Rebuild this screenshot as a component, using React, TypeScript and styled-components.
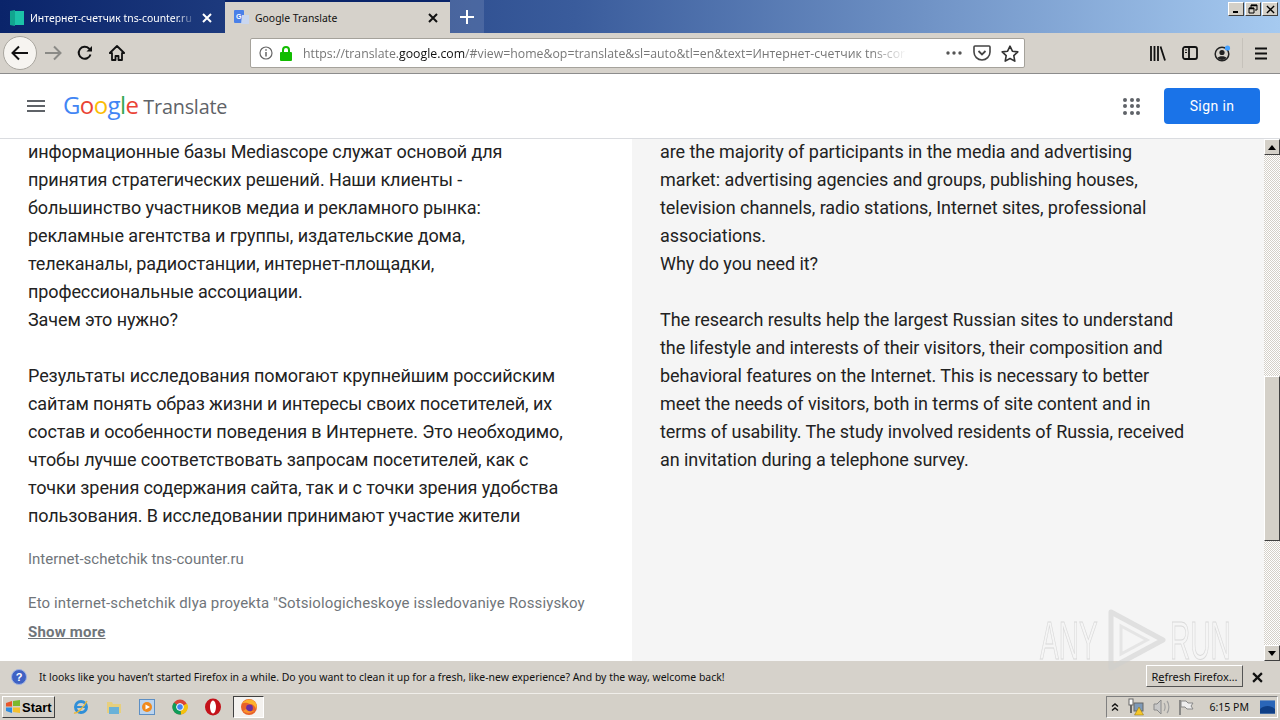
import React from "react";
import styled, { createGlobalStyle } from "styled-components";

const Global = createGlobalStyle`
	html, body { margin: 0; padding: 0; width: 1280px; height: 720px; overflow: hidden; background: #fff; }
	* { box-sizing: border-box; }
`;

const Page = styled.div`
	width: 1280px;
	height: 720px;
	display: flex;
	flex-direction: column;
	position: relative;
	overflow: hidden;
	font-family: "Roboto", "Liberation Sans", sans-serif;
`;

/* ---------- browser chrome ---------- */
const TabStrip = styled.div`
	height: 33px;
	flex: none;
	display: flex;
	align-items: stretch;
	background: linear-gradient(90deg, #0a246a 0%, #3a5c9c 45%, #a6caf0 100%);
	font-family: "Noto Sans", "Liberation Sans", sans-serif;
	font-size: 10.4px;
`;

const Tab = styled.div<{ $active?: boolean }>`
	display: flex;
	align-items: center;
	padding: ${(p) => (p.$active ? "0 12px 0 9px" : "2px 12px 0 10px")};
	color: ${(p) => (p.$active ? "#111" : "#fff")};
	background: ${(p) => (p.$active ? "#d6d2cb" : "transparent")};
	border-top: ${(p) => (p.$active ? "2px solid #0a246a" : "none")};
	margin-left: ${(p) => (p.$active ? "1px" : "0")};
	width: ${(p) => (p.$active ? "225px" : "224px")};
`;

const TabTitle = styled.span<{ $fade?: boolean }>`
	flex: 1;
	margin-left: ${(p) => (p.$fade ? 6 : 5)}px;
	white-space: nowrap;
	overflow: hidden;
	${(p) => p.$fade && "-webkit-mask-image: linear-gradient(90deg, #000 88%, transparent 100%); margin-right: 6px;"}
`;

const NewTab = styled.div`
	width: 34px;
	display: flex;
	align-items: center;
	justify-content: center;
	background: rgba(255, 255, 255, 0.12);
`;

const Spacer = styled.div`
	flex: 1;
`;

const WinButtons = styled.div`
	display: flex;
	gap: 1px;
	padding: 2px 2px 0 0;
	align-items: flex-start;
`;

const WinButton = styled.div`
	width: 16px;
	height: 14px;
	background: #d4d0c8;
	border: 1px solid;
	border-color: #fff #404040 #404040 #fff;
	display: flex;
	align-items: center;
	justify-content: center;
`;

const NavBar = styled.div`
	height: 41px;
	flex: none;
	display: flex;
	align-items: center;
	background: #d6d2cb;
	border-bottom: 1px solid #8c8c8c;
	padding-left: 3px;
`;

const BackCircle = styled.div`
	width: 34px;
	height: 34px;
	border-radius: 50%;
	background: #f6f4f0;
	border: 1px solid #a9a69f;
	display: flex;
	align-items: center;
	justify-content: center;
`;

const NavIcon = styled.div<{ $w?: number }>`
	width: ${(p) => p.$w ?? 32}px;
	height: 32px;
	display: flex;
	align-items: center;
	justify-content: center;
	flex: none;
`;

const UrlBar = styled.div`
	width: 775px;
	height: 30px;
	margin-left: 117px;
	background: #fff;
	border: 1px solid #a5a29b;
	border-radius: 2px;
	display: flex;
	align-items: center;
	padding: 0 5px 0 8px;
	font-family: "Open Sans", "Liberation Sans", sans-serif;
	font-size: 12.3px;
	color: #777;
	flex: none;
`;

const UrlText = styled.div`
	width: 604px;
	margin-left: 10px;
	white-space: nowrap;
	overflow: hidden;
	-webkit-mask-image: linear-gradient(90deg, #000 94%, transparent 100%);
	b {
		font-weight: 400;
		color: #111;
	}
`;

const UrlIcons = styled.div`
	display: flex;
	align-items: center;
	gap: 10px;
	margin-left: auto;
`;

const ToolIcons = styled.div`
	display: flex;
	align-items: center;
	margin-left: auto;
	padding-right: 7px;
`;

const ToolDivider = styled.div`
	width: 1px;
	height: 30px;
	background: #c6c2bb;
	margin: 0 6px 0 4px;
`;

/* ---------- translate header ---------- */
const Header = styled.header`
	height: 65px;
	flex: none;
	background: #fff;
	border-bottom: 1px solid #dadce0;
	display: flex;
	align-items: center;
	padding: 0 20px 0 27px;
`;

const Burger = styled.div`
	width: 18px;
	height: 12px;
	border-top: 2px solid #5f6368;
	border-bottom: 2px solid #5f6368;
	position: relative;
	&::after {
		content: "";
		position: absolute;
		left: 0;
		right: 0;
		top: 3px;
		height: 2px;
		background: #5f6368;
	}
`;

const Logo = styled.div`
	margin: -3px 0 0 18px;
	display: flex;
	align-items: baseline;
	font-family: "Open Sans", "Liberation Sans", sans-serif;
	font-size: 24px;
	letter-spacing: -0.6px;
`;

const LogoLetter = styled.span<{ $c: string }>`
	color: ${(p) => p.$c};
`;

const LogoWord = styled.span`
	margin-left: 5px;
	font-size: 19.8px;
	letter-spacing: -0.2px;
	color: #5f6368;
`;

const AppsGrid = styled.div`
	margin-left: auto;
	width: 17px;
	display: grid;
	grid-template-columns: repeat(3, 4px);
	gap: 2.5px;
`;

const AppsDot = styled.span`
	width: 4px;
	height: 4px;
	border-radius: 50%;
	background: #5f6368;
`;

const SignIn = styled.div`
	margin-left: 24px;
	width: 96px;
	height: 36px;
	background: #1a73e8;
	border-radius: 4px;
	color: #fff;
	font-size: 14px;
	font-weight: 400;
	letter-spacing: 0.4px;
	display: flex;
	align-items: center;
	justify-content: center;
`;

/* ---------- content ---------- */
const Content = styled.div`
	flex: 1;
	min-height: 0;
	display: flex;
	overflow: hidden;
`;

const SourceCol = styled.div`
	width: 632px;
	padding: 0 0 0 28px;
	background: #fff;
	display: flex;
	flex-direction: column;
`;

const ResultCol = styled.div`
	width: 632px;
	padding-left: 28px;
	background: #f5f5f5;
`;

const Lines = styled.div<{ $spacing: number }>`
	margin-top: -1px;
	font-size: 18px;
	line-height: 28px;
	letter-spacing: ${(p) => p.$spacing}px;
	color: #222;
	white-space: nowrap;
`;

const Line = styled.div`
	height: 28px;
`;

const Translit = styled.div`
	margin-top: 19px;
	font-size: 15px;
	line-height: 20px;
	color: #70757a;
	white-space: nowrap;
`;

const TranslitBody = styled(Translit)`
	margin-top: 24px;
	letter-spacing: 0.12px;
`;

const ShowMore = styled.div`
	margin-top: 9px;
	font-size: 15px;
	line-height: 20px;
	font-weight: 700;
	letter-spacing: 0.2px;
	color: #70757a;
	text-decoration: underline;
`;

const ScrollBar = styled.div`
	width: 16px;
	display: flex;
	flex-direction: column;
	background: repeating-conic-gradient(#d4d0c8 0% 25%, #fff 0% 50%) 0 0 / 2px 2px;
`;

const ScrollBtn = styled.div`
	width: 16px;
	height: 16px;
	background: #d4d0c8;
	border: 1px solid;
	border-color: #fff #404040 #404040 #fff;
	display: flex;
	align-items: center;
	justify-content: center;
	flex: none;
`;

const ScrollThumb = styled.div`
	width: 16px;
	height: 165px;
	margin-top: 221px;
	background: #d4d0c8;
	border: 1px solid;
	border-color: #fff #404040 #404040 #fff;
`;

const ScrollGap = styled.div`
	flex: 1;
`;

/* ---------- notification + taskbar ---------- */
const InfoBar = styled.div`
	height: 33px;
	flex: none;
	display: flex;
	align-items: center;
	padding: 0 17px 0 11px;
	background: #d6d2cb;
	border-bottom: 1px solid #f0eeea;
	font-family: "Noto Sans", "Liberation Sans", sans-serif;
	font-size: 10.45px;
	color: #111;
`;

const InfoText = styled.span`
	margin-left: 12px;
	white-space: nowrap;
`;

const RefreshBtn = styled.div`
	margin: 0 9px 2px auto;
	width: 97px;
	height: 22px;
	background: #d4d0c8;
	border: 1px solid;
	border-color: #fff #555 #555 #fff;
	display: flex;
	align-items: center;
	justify-content: center;
	font-size: 11px;
	white-space: nowrap;
	u {
		text-decoration: underline;
	}
`;

const Taskbar = styled.div`
	height: 26px;
	flex: none;
	background: #d4d0c8;
	display: flex;
	align-items: center;
	padding: 0 2px;
`;

const StartBtn = styled.div`
	width: 53px;
	height: 22px;
	background: #d4d0c8;
	border: 1px solid;
	border-color: #fff #404040 #404040 #fff;
	display: flex;
	align-items: center;
	gap: 1px;
	padding-left: 2px;
	font-family: "Liberation Sans", sans-serif;
	font-weight: 700;
	font-size: 13px;
	color: #000;
`;

const QuickIcons = styled.div`
	display: flex;
	align-items: center;
	margin-left: 18px;
	gap: 17px;
`;

const ActiveTask = styled.div`
	width: 31px;
	height: 22px;
	margin-left: -5px;
	background: #f4f2ef;
	border: 1px solid;
	border-color: #404040 #fff #fff #404040;
	display: flex;
	align-items: center;
	justify-content: center;
`;

const Tray = styled.div`
	margin-left: auto;
	width: 172px;
	height: 22px;
	border: 1px solid;
	border-color: #808080 #fff #fff #808080;
	display: flex;
	align-items: center;
	padding: 0 2px 0 3px;
	font-family: "Noto Sans", "Liberation Sans", sans-serif;
	font-size: 10.5px;
	color: #111;
	gap: 8px;
`;

const Clock = styled.span`
	margin-left: auto;
	white-space: nowrap;
`;

const Watermark = styled.div`
	position: absolute;
	left: 1040px;
	top: 608px;
	width: 192px;
	height: 64px;
	display: flex;
	align-items: center;
	justify-content: space-between;
	pointer-events: none;
`;

const WatermarkWord = styled.span`
	display: block;
	width: 62px;
	font-family: "Liberation Sans", sans-serif;
	font-size: 54px;
	line-height: 64px;
	color: transparent;
	-webkit-text-stroke: 1px rgba(205, 205, 205, 0.7);
	transform: scaleX(0.52);
	transform-origin: left center;
	white-space: nowrap;
`;

/* ---------- drawings ---------- */
const X = ({ c, s = 10, w = 2 }: { c: string; s?: number; w?: number }) => (
	<svg width={s} height={s} viewBox="0 0 10 10">
		<path d="M1 1L9 9M9 1L1 9" stroke={c} strokeWidth={w} fill="none" />
	</svg>
);

const Firefox = () => (
	<svg width="18" height="18" viewBox="0 0 18 18">
		<circle cx="9" cy="9" r="8" fill="#e8622a" />
		<circle cx="9.5" cy="10" r="3.4" fill="#6a2fa0" />
		<path d="M2 6C4 1 12 0 15 4c2 2 2 5 1 7-1-3-3-5-6-5C7 5 5 4 2 6z" fill="#fdb32b" />
		<path d="M3 13c3 3 9 3 12-1-3 2-7 2-9-1z" fill="#f9912c" />
	</svg>
);

const sourceLines = [
	"информационные базы Mediascope служат основой для",
	"принятия стратегических решений. Наши клиенты -",
	"большинство участников медиа и рекламного рынка:",
	"рекламные агентства и группы, издательские дома,",
	"телеканалы, радиостанции, интернет-площадки,",
	"профессиональные ассоциации.",
	"Зачем это нужно?",
	"",
	"Результаты исследования помогают крупнейшим российским",
	"сайтам понять образ жизни и интересы своих посетителей, их",
	"состав и особенности поведения в Интернете. Это необходимо,",
	"чтобы лучше соответствовать запросам посетителей, как с",
	"точки зрения содержания сайта, так и с точки зрения удобства",
	"пользования. В исследовании принимают участие жители",
];

const resultLines = [
	"are the majority of participants in the media and advertising",
	"market: advertising agencies and groups, publishing houses,",
	"television channels, radio stations, Internet sites, professional",
	"associations.",
	"Why do you need it?",
	"",
	"The research results help the largest Russian sites to understand",
	"the lifestyle and interests of their visitors, their composition and",
	"behavioral features on the Internet. This is necessary to better",
	"meet the needs of visitors, both in terms of site content and in",
	"terms of usability. The study involved residents of Russia, received",
	"an invitation during a telephone survey.",
];

const logoLetters: [string, string][] = [
	["G", "#4285f4"],
	["o", "#ea4335"],
	["o", "#fbbc05"],
	["g", "#4285f4"],
	["l", "#34a853"],
	["e", "#ea4335"],
];

const App: React.FC = () => {
	return (
		<Page>
			<Global />
			<TabStrip>
				<Tab>
					<svg width="14" height="16" viewBox="0 0 14 16">
						<path d="M0 1l5-1v16l-5-1z" fill="#12a58f" />
						<rect x="5" y="1" width="9" height="14" fill="#1cc3a8" />
					</svg>
					<TabTitle $fade>Интернет-счетчик tns-counter.ru</TabTitle>
					<X c="#fff" />
				</Tab>
				<Tab $active>
					<svg width="16" height="16" viewBox="0 0 16 16">
						<rect x="0" y="0" width="10" height="13" rx="1" fill="#4a80e8" />
						<path d="M8 5h7v9H7z" fill="#c9d6ef" />
						<text x="2" y="9" fontSize="7" fill="#fff" fontFamily="Liberation Sans" fontWeight="700">G</text>
					</svg>
					<TabTitle>Google Translate</TabTitle>
					<X c="#111" />
				</Tab>
				<NewTab>
					<svg width="14" height="14" viewBox="0 0 14 14">
						<path d="M7 0v14M0 7h14" stroke="#fff" strokeWidth="2" />
					</svg>
				</NewTab>
				<Spacer />
				<WinButtons>
					<WinButton>
						<svg width="8" height="8" viewBox="0 0 8 8"><rect x="1" y="6" width="5" height="2" fill="#000" /></svg>
					</WinButton>
					<WinButton>
						<svg width="10" height="10" viewBox="0 0 10 10">
							<path d="M3 1h6v5H7M1 4h5v5H1z M3 1v3" fill="none" stroke="#000" strokeWidth="1" />
							<path d="M3 1.5h6M1 4.5h5" stroke="#000" strokeWidth="1.5" />
						</svg>
					</WinButton>
					<WinButton>
						<X c="#000" s={9} w={1.5} />
					</WinButton>
				</WinButtons>
			</TabStrip>

			<NavBar>
				<BackCircle>
					<svg width="18" height="16" viewBox="0 0 18 16">
						<path d="M1.5 8H17M8 1.5L1.5 8 8 14.5" fill="none" stroke="#111" strokeWidth="2" />
					</svg>
				</BackCircle>
				<NavIcon>
					<svg width="18" height="16" viewBox="0 0 18 16">
						<path d="M16.5 8H1M10 1.5L16.5 8 10 14.5" fill="none" stroke="#8a8a86" strokeWidth="2" />
					</svg>
				</NavIcon>
				<NavIcon>
					<svg width="16" height="16" viewBox="0 0 16 16">
						<path d="M13.5 9.5A6 6 0 1 1 12 3.5L14 5" fill="none" stroke="#111" strokeWidth="2" />
						<path d="M15 1v5.5H9.5z" fill="#111" />
					</svg>
				</NavIcon>
				<NavIcon>
					<svg width="16" height="16" viewBox="0 0 16 16">
						<path d="M8 1L0.8 8H3v7h3.5v-4h3v4H13V8h2.2z" fill="none" stroke="#111" strokeWidth="1.8" strokeLinejoin="round" />
					</svg>
				</NavIcon>
				<UrlBar>
					<svg width="14" height="14" viewBox="0 0 14 14">
						<circle cx="7" cy="7" r="6" fill="none" stroke="#666" strokeWidth="1.2" />
						<path d="M7 6v4.5M7 3.2v1.6" stroke="#666" strokeWidth="1.5" />
					</svg>
					<svg width="14" height="15" viewBox="0 0 14 15" style={{ marginLeft: 6 }}>
						<rect x="1" y="6" width="12" height="9" rx="1" fill="#12bc00" />
						<path d="M4 6V4a3 3 0 0 1 6 0v2" fill="none" stroke="#12bc00" strokeWidth="2" />
					</svg>
					<UrlText>
						https://translate.<b>google.com</b>/#view=home&amp;op=translate&amp;sl=auto&amp;tl=en&amp;text=Интернет-счетчик tns-cor
					</UrlText>
					<UrlIcons>
						<svg width="16" height="4" viewBox="0 0 16 4">
							<circle cx="2" cy="2" r="1.7" fill="#555" />
							<circle cx="8" cy="2" r="1.7" fill="#555" />
							<circle cx="14" cy="2" r="1.7" fill="#555" />
						</svg>
						<svg width="18" height="16" viewBox="0 0 18 16" style={{ marginLeft: 1 }}>
							<path d="M2 1h14a1 1 0 0 1 1 1v5a8 8 0 0 1-16 0V2a1 1 0 0 1 1-1z" fill="none" stroke="#444" strokeWidth="1.6" />
							<path d="M5.5 6L9 9.5 12.5 6" fill="none" stroke="#444" strokeWidth="1.8" />
						</svg>
						<svg width="18" height="17" viewBox="0 0 18 17">
							<path d="M9 1.2l2.4 5 5.4.7-4 3.8 1 5.4L9 13.5l-4.8 2.6 1-5.4-4-3.8 5.4-.7z" fill="none" stroke="#333" strokeWidth="1.6" strokeLinejoin="round" />
						</svg>
					</UrlIcons>
				</UrlBar>
				<ToolIcons>
					<NavIcon>
						<svg width="16" height="15" viewBox="0 0 16 15">
							<path d="M1 0v15M4.5 0v15M8 0v15M10.5 0.5l4.5 14" stroke="#111" strokeWidth="1.8" fill="none" />
						</svg>
					</NavIcon>
					<NavIcon>
						<svg width="16" height="14" viewBox="0 0 16 14">
							<rect x="1" y="1" width="14" height="12" rx="2" fill="none" stroke="#111" strokeWidth="1.8" />
							<path d="M7 1v12" stroke="#111" strokeWidth="1.8" />
							<path d="M3 4h2M3 6.5h2" stroke="#111" strokeWidth="1" />
						</svg>
					</NavIcon>
					<NavIcon>
						<svg width="17" height="17" viewBox="0 0 17 17">
							<circle cx="8" cy="9" r="6.8" fill="none" stroke="#222" strokeWidth="1.5" />
							<circle cx="8" cy="7.5" r="2.6" fill="#222" />
							<path d="M3.5 13c1-2.5 8-2.5 9 0a6 6 0 0 1-9 0z" fill="#222" />
							<circle cx="13.5" cy="3" r="2.6" fill="#45a1ff" />
						</svg>
					</NavIcon>
					<ToolDivider />
					<NavIcon $w={24}>
						<svg width="14" height="13" viewBox="0 0 14 13">
							<path d="M1 1.5h12M1 6.5h12M1 11.5h12" stroke="#111" strokeWidth="2" />
						</svg>
					</NavIcon>
				</ToolIcons>
			</NavBar>

			<Header>
				<Burger />
				<Logo>
					{logoLetters.map(([l, c], i) => (
						<LogoLetter key={i} $c={c}>{l}</LogoLetter>
					))}
					<LogoWord>Translate</LogoWord>
				</Logo>
				<AppsGrid>
					{Array.from({ length: 9 }).map((_, i) => (
						<AppsDot key={i} />
					))}
				</AppsGrid>
				<SignIn>Sign in</SignIn>
			</Header>

			<Content>
				<SourceCol>
					<Lines $spacing={-0.1}>
						{sourceLines.map((l, i) => (
							<Line key={i}>{l}</Line>
						))}
					</Lines>
					<Translit>Internet-schetchik tns-counter.ru</Translit>
					<TranslitBody>Eto internet-schetchik dlya proyekta "Sotsiologicheskoye issledovaniye Rossiyskoy</TranslitBody>
					<ShowMore>Show more</ShowMore>
				</SourceCol>
				<ResultCol>
					<Lines $spacing={-0.06}>
						{resultLines.map((l, i) => (
							<Line key={i}>{l}</Line>
						))}
					</Lines>
				</ResultCol>
				<ScrollBar>
					<ScrollBtn>
						<svg width="8" height="5" viewBox="0 0 8 5"><path d="M4 0l4 5H0z" fill="#000" /></svg>
					</ScrollBtn>
					<ScrollThumb />
					<ScrollGap />
					<ScrollBtn>
						<svg width="8" height="5" viewBox="0 0 8 5"><path d="M0 0h8L4 5z" fill="#000" /></svg>
					</ScrollBtn>
				</ScrollBar>
			</Content>

			<InfoBar>
				<svg width="16" height="16" viewBox="0 0 16 16">
					<circle cx="8" cy="8" r="7.5" fill="#3f62c4" stroke="#9fb2e2" />
					<text x="8" y="12" textAnchor="middle" fontSize="11" fontWeight="700" fill="#fff" fontFamily="Liberation Sans">?</text>
				</svg>
				<InfoText>It looks like you haven’t started Firefox in a while. Do you want to clean it up for a fresh, like-new experience? And by the way, welcome back!</InfoText>
				<RefreshBtn><span>R<u>e</u>fresh Firefox…</span></RefreshBtn>
				<X c="#111" s={11} />
			</InfoBar>

			<Taskbar>
				<StartBtn>
					<svg width="16" height="14" viewBox="0 0 16 14">
						<path d="M1 3l6-2v5.5H1z" fill="#e8562a" />
						<path d="M8 1l7-1v6H8z" fill="#7cb82f" />
						<path d="M1 7.5h6V13l-6-2z" fill="#2d8be0" />
						<path d="M8 7.5h7V13l-7-1z" fill="#f5c02c" />
					</svg>
					Start
				</StartBtn>
				<QuickIcons>
					<svg width="16" height="16" viewBox="0 0 16 16">
						<circle cx="8" cy="8" r="5.5" fill="none" stroke="#2f8fd8" strokeWidth="3" />
						<path d="M3 8h10" stroke="#2f8fd8" strokeWidth="2" />
						<path d="M1 14c3 1 9-5 13-12" fill="none" stroke="#e8b83a" strokeWidth="1.5" />
					</svg>
					<svg width="16" height="16" viewBox="0 0 16 16">
						<path d="M1 3h5l1 2h8v9H1z" fill="#e7cf7d" />
						<rect x="3" y="8" width="10" height="7" fill="#6ab1d8" />
					</svg>
					<svg width="16" height="16" viewBox="0 0 16 16">
						<rect x="0.5" y="0.5" width="15" height="15" fill="#bcd4ee" stroke="#5d8fc4" />
						<circle cx="8" cy="8" r="5" fill="#f08a1d" />
						<path d="M6.5 5.5L11 8l-4.5 2.5z" fill="#fff" />
					</svg>
					<svg width="16" height="16" viewBox="0 0 16 16">
						<circle cx="8" cy="8" r="7.5" fill="#db4437" />
						<path d="M8 8l7-3.5a7.5 7.5 0 0 1-6 11z" fill="#f4c20d" />
						<path d="M8 8L9 15.5A7.5 7.5 0 0 1 2 3.5z" fill="#0f9d58" />
						<circle cx="8" cy="8" r="3.4" fill="#4285f4" stroke="#fff" />
					</svg>
					<svg width="16" height="18" viewBox="0 0 16 18">
						<ellipse cx="8" cy="9" rx="8" ry="8.5" fill="#c4121a" />
						<ellipse cx="8" cy="9" rx="3" ry="6.5" fill="#fff" />
					</svg>
					<ActiveTask><Firefox /></ActiveTask>
				</QuickIcons>
				<Tray>
					<svg width="10" height="10" viewBox="0 0 10 10">
						<path d="M2 4.5L5 2l3 2.5M2 8.5L5 6l3 2.5" fill="none" stroke="#111" strokeWidth="1.4" />
					</svg>
					<svg width="17" height="18" viewBox="0 0 17 18">
						<rect x="1" y="1" width="4" height="6" fill="#fff" stroke="#666" />
						<path d="M3 7v8" stroke="#666" strokeWidth="2" />
						<rect x="6" y="5" width="9" height="8" fill="#7e9ab8" stroke="#666" />
						<path d="M11 9l4.5 8h-9z" fill="#f6c728" stroke="#8a6d10" strokeWidth="0.5" />
					</svg>
					<svg width="17" height="16" viewBox="0 0 17 16">
						<path d="M1 5h3l4-4v14l-4-4H1z" fill="#c8c8c8" stroke="#8a8a8a" />
						<path d="M11 4c1.5 2 1.5 6 0 8M14 2c2.5 3 2.5 9 0 12" fill="none" stroke="#a0a0a0" strokeWidth="1.2" />
					</svg>
					<svg width="16" height="16" viewBox="0 0 16 16">
						<path d="M2 1v15" stroke="#777" strokeWidth="1.6" />
						<path d="M3 2h5l2 2h5l-2 3 2 3H9L7 8H3z" fill="#eee" stroke="#888" />
					</svg>
					<Clock>6:15 PM</Clock>
					<svg width="15" height="14" viewBox="0 0 16 14" style={{ marginLeft: 3 }}>
						<rect x="0" y="0" width="16" height="14" fill="#2a66b8" />
						<path d="M0 9c5-4 11-4 16 0v5H0z" fill="#0f3f86" />
					</svg>
				</Tray>
			</Taskbar>

			<Watermark>
				<WatermarkWord>ANY</WatermarkWord>
				<svg width="62" height="64" viewBox="0 0 62 64">
					<path d="M6 4L58 32 6 60z" fill="none" stroke="rgba(205,205,205,.55)" strokeWidth="5" strokeLinejoin="round" />
					<path d="M16 18L42 32 16 46z" fill="none" stroke="rgba(205,205,205,.4)" strokeWidth="3" />
				</svg>
				<WatermarkWord>RUN</WatermarkWord>
			</Watermark>
		</Page>
	);
};

export default App;
